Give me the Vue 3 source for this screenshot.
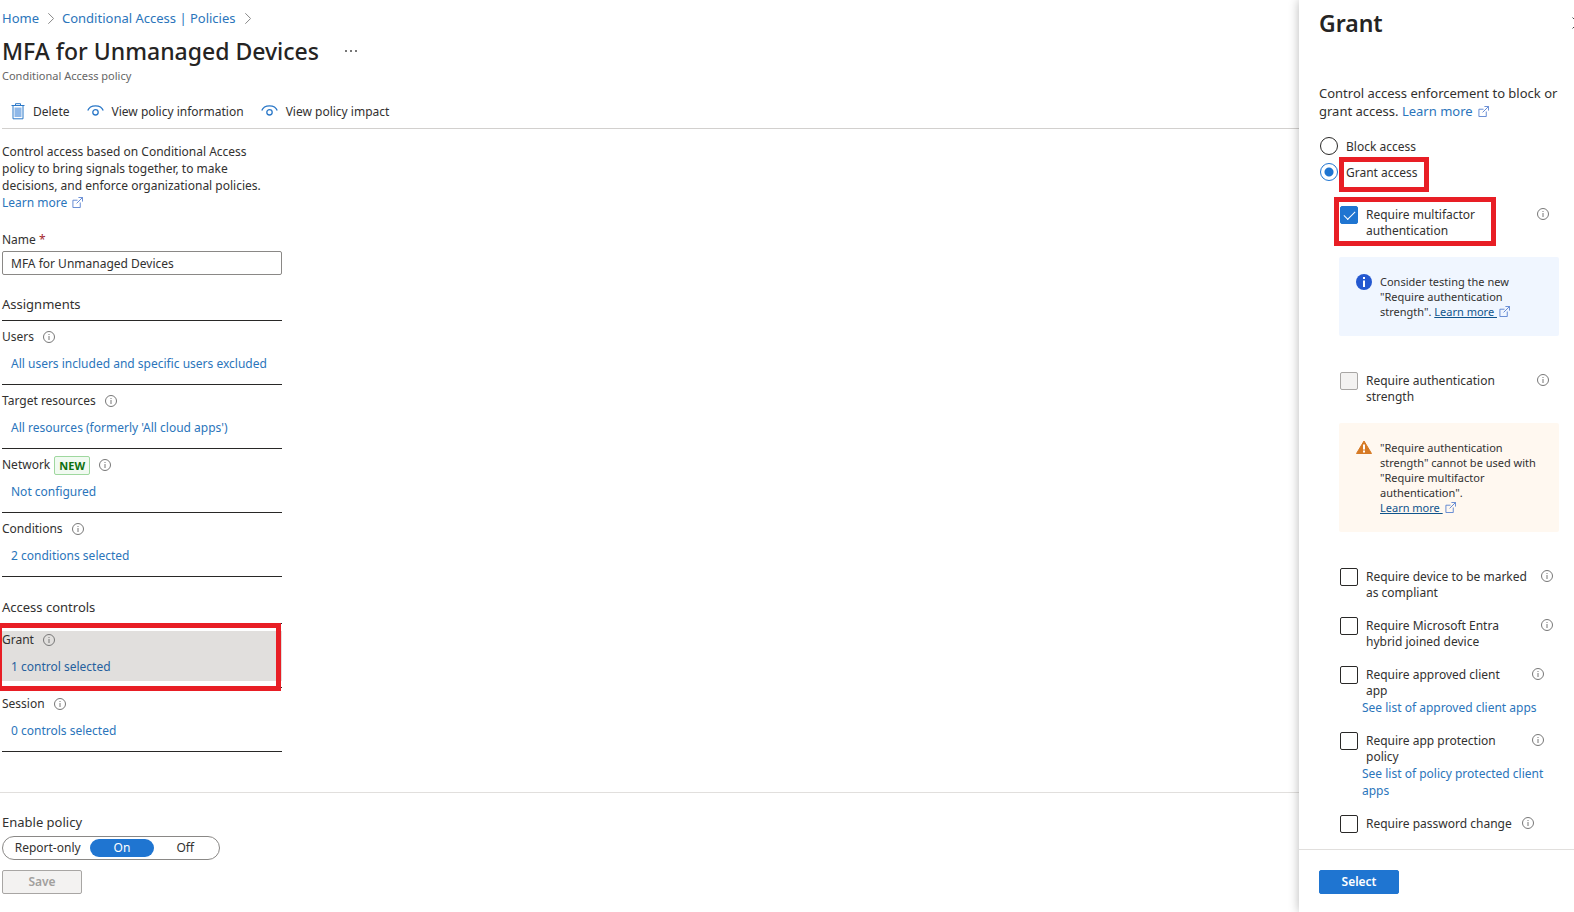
<template>
  <div class="page">
    <main class="blade">
      <header class="blade-header">
        <nav class="breadcrumb" aria-label="Breadcrumb">
          <a href="#">Home</a>
          <svg class="chevron" viewBox="0 0 8 12"><path d="M1.5 0l6 6-6 6" /></svg>
          <a href="#">Conditional Access | Policies</a>
          <svg class="chevron" viewBox="0 0 8 12"><path d="M1.5 0l6 6-6 6" /></svg>
        </nav>
        <div class="title-row">
          <h1>MFA for Unmanaged Devices</h1>
          <button class="more" type="button" aria-label="More actions">
            <svg viewBox="0 0 12 2"><path d="M0 0h2v2H0zM5 0h2v2H5zM10 0h2v2h-2z" /></svg>
          </button>
        </div>
        <p class="subtitle">Conditional Access policy</p>
      </header>

      <div class="toolbar">
        <button type="button">
          <svg class="trash" viewBox="0 0 14 17">
            <path class="bin" d="M3.500 4.500h7v9.500h-7z" />
            <path class="line" d="M.5 2.500h13M4.500 2.500V.7h5v1.800M2 2.500v13.300h10V2.500" />
          </svg>
          Delete
        </button>
        <button v-for="label in viewActions" :key="label" type="button">
          <svg class="eye" viewBox="0 0 17 14">
            <path d="M.8 5.500C1.800 2.600 4.800.8 8.500.8s6.700 1.800 7.700 4.700" />
            <circle cx="8.500" cy="7.300" r="2.700" />
          </svg>
          {{ label }}
        </button>
      </div>

      <div class="blade-body">
        <p class="intro">
          Control access based on Conditional Access policy to bring signals together, to make
          decisions, and enforce organizational policies.
          <a class="learn" href="#">Learn more <svg class="external" viewBox="0 0 12 12"><path :d="externalPath" /></svg></a>
        </p>

        <label class="field-label" for="policy-name">Name <span class="required">*</span></label>
        <input id="policy-name" v-model="policyName" class="text-input" type="text" />

        <section v-for="group in groups" :key="group.title" class="group">
          <h2>{{ group.title }}</h2>
          <div v-for="item in group.items" :key="item.label" class="setting">
            <div class="setting-inner" :class="{ selected: item.selected }">
              <div class="setting-label">
                {{ item.label }}
                <span v-if="item.isNew" class="badge">NEW</span>
                <svg class="info" viewBox="0 0 12 12"><circle cx="6" cy="6" r="5.500" /><path d="M6 5v4M6 3v1" /></svg>
              </div>
              <a href="#">{{ item.value }}</a>
            </div>
            <span v-if="item.selected" class="marker marker-setting"></span>
          </div>
        </section>
      </div>

      <footer class="blade-footer">
        <fieldset>
          <legend>Enable policy</legend>
          <div class="toggle">
            <label v-for="state in states" :key="state" :class="{ active: enabled === state }">
              <input v-model="enabled" type="radio" name="enable-policy" :value="state" />
              {{ state }}
            </label>
          </div>
        </fieldset>
        <button class="btn" type="button" disabled>Save</button>
      </footer>
    </main>

    <aside class="panel">
      <header class="panel-header">
        <h2>Grant</h2>
        <button class="close" type="button" aria-label="Close">
          <svg viewBox="0 0 12 12"><path d="M.5.5l11 11M11.500.5l-11 11" /></svg>
        </button>
      </header>

      <div class="panel-body">
        <p class="panel-intro">
          Control access enforcement to block or grant access.
          <a class="learn" href="#">Learn more <svg class="external" viewBox="0 0 12 12"><path :d="externalPath" /></svg></a>
        </p>

        <div class="radios">
          <label class="radio">
            <input v-model="mode" type="radio" name="mode" value="block" />
            <span>Block access</span>
          </label>
          <label class="radio">
            <input v-model="mode" type="radio" name="mode" value="grant" />
            <span class="marked">Grant access<i class="marker marker-radio"></i></span>
          </label>
        </div>

        <div class="controls">
          <template v-for="control in controls" :key="control.id">
            <div class="control" :class="control.size">
              <input :id="control.id" v-model="control.checked" type="checkbox" :disabled="control.disabled" />
              <label :for="control.id">{{ control.label }}</label>
              <svg class="info" viewBox="0 0 12 12"><circle cx="6" cy="6" r="5.500" /><path d="M6 5v4M6 3v1" /></svg>
              <span v-if="control.checked" class="marker marker-control"></span>
            </div>
            <a v-if="control.link" class="control-link" href="#">{{ control.link }}</a>
            <div v-if="control.note" class="note" :class="control.note.type">
              <svg v-if="control.note.type === 'tip'" class="note-icon" viewBox="0 0 16 16">
                <circle cx="8" cy="8" r="8" fill="#2458d0" />
                <path d="M7 6.500h2V13H7zM7 3h2v2H7z" fill="#fff" />
              </svg>
              <svg v-else class="note-icon" viewBox="0 0 16 16">
                <path d="M8 1L15.500 13.500H.5z" fill="#d67a25" stroke="#d67a25" stroke-linejoin="round" />
                <path d="M7 4.500h2v5H7zM7 10.500h2v2H7z" fill="#fff" />
              </svg>
              <p>
                {{ control.note.text }}
                <br v-if="control.note.type === 'warn'" />
                <a href="#"><u>Learn more&nbsp;</u><svg class="external" viewBox="0 0 12 12"><path :d="externalPath" /></svg></a>
              </p>
            </div>
          </template>
        </div>
      </div>

      <footer class="panel-footer">
        <button class="btn primary" type="button">Select</button>
      </footer>
    </aside>
  </div>
</template>

<script setup>
import { ref } from 'vue';

const externalPath = 'M6 3.500H1v8h8V6M7 .5h4.500V5M11.500.5L5 7';

const viewActions = ['View policy information', 'View policy impact'];
const states = ['Report-only', 'On', 'Off'];

const policyName = ref('MFA for Unmanaged Devices');
const enabled = ref('On');
const mode = ref('grant');

const groups = [
  {
    title: 'Assignments',
    items: [
      { label: 'Users', value: 'All users included and specific users excluded' },
      { label: 'Target resources', value: "All resources (formerly 'All cloud apps')" },
      { label: 'Network', value: 'Not configured', isNew: true },
      { label: 'Conditions', value: '2 conditions selected' }
    ]
  },
  {
    title: 'Access controls',
    items: [
      { label: 'Grant', value: '1 control selected', selected: true },
      { label: 'Session', value: '0 controls selected' }
    ]
  }
];

const controls = ref([
  {
    id: 'mfa',
    label: 'Require multifactor authentication',
    checked: true,
    note: { type: 'tip', text: 'Consider testing the new "Require authentication strength".' }
  },
  {
    id: 'strength',
    label: 'Require authentication strength',
    checked: false,
    disabled: true,
    note: { type: 'warn', text: '"Require authentication strength" cannot be used with "Require multifactor authentication".' }
  },
  { id: 'compliant', label: 'Require device to be marked as compliant', checked: false, size: 'wide' },
  { id: 'hybrid', label: 'Require Microsoft Entra hybrid joined device', checked: false, size: 'wide' },
  { id: 'client', label: 'Require approved client app', checked: false, size: 'narrow', link: 'See list of approved client apps' },
  { id: 'protection', label: 'Require app protection policy', checked: false, size: 'narrow', link: 'See list of policy protected client apps' },
  { id: 'password', label: 'Require password change', checked: false }
]);
</script>

<style>
body {
  margin: 0;
  background: #fff;
}
</style>

<style scoped>
.page {
  display: flex;
  min-height: 100vh;
  overflow: hidden;
  color: #323130;
  font-family: 'Segoe UI', 'Noto Sans', sans-serif;
  font-size: 12px;
  line-height: 18px;
}

.page * {
  box-sizing: border-box;
}

h1, h2, p {
  margin: 0;
}

a {
  color: #2b75bb;
  text-decoration: none;
}

button {
  font: inherit;
  color: inherit;
  cursor: pointer;
}

svg {
  flex: none;
  fill: none;
}

/* Main blade */
.blade {
  display: flex;
  flex: 1;
  flex-direction: column;
  min-width: 0;
}

.blade-header {
  padding: 8px 2px 0;
}

.breadcrumb {
  display: flex;
  align-items: center;
  gap: 8px;
  font-size: 13px;
  line-height: 20px;
}

.chevron {
  width: 7px;
  height: 11px;
  stroke: #777;
}

.title-row {
  display: flex;
  align-items: center;
  gap: 26px;
  margin-top: 7px;
}

h1,
.panel-header h2 {
  color: #252423;
  font-size: 23px;
  font-weight: 500;
  line-height: 32px;
}

.more {
  display: flex;
  padding: 0;
  border: 0;
  background: none;
}

.more svg {
  width: 12px;
  height: 2px;
  fill: #777;
}

.subtitle {
  margin-top: 1px;
  color: #666;
  font-size: 11px;
  line-height: 16px;
}

.toolbar {
  display: flex;
  gap: 17px;
  margin: 11px 0 0 2px;
  padding: 0 9px;
  border-bottom: 1px solid #d2d0ce;
}

.toolbar button {
  display: flex;
  align-items: center;
  gap: 8px;
  height: 33px;
  padding: 0;
  border: 0;
  background: none;
}

.trash {
  width: 14px;
  height: 17px;
}

.trash .bin {
  fill: #8fb8e8;
}

.trash .line,
.eye {
  stroke: #2b78c8;
}

.eye {
  width: 17px;
  height: 14px;
  stroke-width: 1.3;
}

.blade-body {
  width: 280px;
  margin-left: 2px;
  padding-top: 14px;
}

.intro {
  line-height: 17px;
}

.learn {
  white-space: nowrap;
}

.external {
  width: 11px;
  height: 11px;
  margin-left: 2px;
  stroke: #5a82d0;
  vertical-align: -1px;
}

.field-label {
  display: block;
  margin: 20px 0 2px;
}

.required {
  color: #a4262c;
}

.text-input {
  width: 100%;
  height: 24px;
  padding: 0 8px;
  border: 1px solid #8a8886;
  border-radius: 2px;
  color: inherit;
  font: inherit;
}

.group {
  margin-top: 20px;
}

.group + .group {
  margin-top: 21px;
}

.group h2 {
  padding-bottom: 7px;
  border-bottom: 1px solid #292827;
  font-size: 13px;
  font-weight: 400;
}

.setting {
  position: relative;
  padding: 7px 0 6px;
  border-bottom: 1px solid #292827;
}

.setting-inner {
  display: flex;
  flex-direction: column;
  gap: 9px;
  padding-bottom: 5px;
}

.setting-inner.selected {
  background: #e1dfdd;
}

.selected a {
  color: #265f9e;
}

.setting-label {
  display: flex;
  align-items: center;
  height: 18px;
}

.setting-inner a {
  margin-left: 9px;
}

.badge {
  margin-left: 4px;
  padding: 0 4px;
  border: 1px solid #9fd89f;
  border-radius: 2px;
  background: #f1faf1;
  color: #0e700e;
  font-size: 11px;
  font-weight: 700;
  line-height: 17px;
}

.info {
  width: 12px;
  height: 12px;
  margin-left: 9px;
  stroke: #777;
}

/* Red call-out frames */
.marker {
  position: absolute;
  border: 5px solid #e81e25;
  pointer-events: none;
}

.marker-setting {
  inset: -1px 1px -4px -5px;
}

.marker-radio {
  inset: -6px -11px -9px -7px;
}

.marker-control {
  top: -9px;
  bottom: -7px;
  left: -6px;
  width: 162px;
}

/* Footer of the blade */
.blade-footer {
  margin-top: auto;
  padding: 20px 2px 18px;
  border-top: 1px solid #e1dfdd;
}

fieldset {
  min-width: 0;
  margin: 0 0 10px;
  padding: 0;
  border: 0;
}

legend {
  padding: 0 0 5px;
  font-size: 13px;
}

.toggle {
  display: flex;
  align-items: center;
  width: 218px;
  height: 24px;
  padding: 0 2px;
  border: 1px solid #8a8886;
  border-radius: 12px;
}

.toggle label {
  flex: 1 1 62px;
  border-radius: 9px;
  text-align: center;
}

.toggle label:first-child {
  flex-basis: 84px;
}

.toggle .active {
  background: #1f75d1;
  color: #fff;
}

.toggle input {
  position: absolute;
  opacity: 0;
}

.btn {
  width: 80px;
  height: 24px;
  padding: 0;
  border: 1px solid #a8a6a4;
  border-radius: 2px;
  background: #f3f2f1;
  font-weight: 600;
}

.btn:disabled {
  color: #a19f9d;
}

.btn.primary {
  border-color: #1f75d1;
  background: #1f75d1;
  color: #fff;
}

/* Grant panel */
.panel {
  display: flex;
  flex: none;
  flex-direction: column;
  width: 275px;
  background: #fff;
  box-shadow: 0 0 10px rgba(0, 0, 0, 0.28);
}

.panel-header {
  display: flex;
  align-items: center;
  justify-content: space-between;
  margin-right: -10px;
  padding: 7px 0 0 20px;
}

.panel-header h2 {
  font-weight: 600;
}

.close {
  display: flex;
  padding: 0;
  border: 0;
  background: none;
}

.close svg {
  width: 12px;
  height: 12px;
  stroke: #444;
}

.panel-body {
  flex: 1;
  padding: 45px 8px 16px 20px;
}

.panel-intro {
  font-size: 13px;
}

.radios {
  display: flex;
  flex-direction: column;
  gap: 6px;
  margin: 17px 0 23px 1px;
}

.radio {
  display: flex;
  gap: 8px;
  line-height: 20px;
}

.marked {
  position: relative;
}

input[type='radio'],
input[type='checkbox'] {
  flex: none;
  width: 18px;
  height: 18px;
  margin: 0;
  border: 1px solid #292827;
  background: #fff;
  appearance: none;
}

input[type='radio'] {
  border-radius: 50%;
}

input[type='radio']:checked {
  border-color: #1f75d1;
  background: radial-gradient(circle, #1f75d1 4px, #fff 5px);
}

input[type='checkbox'] {
  border-radius: 2px;
}

input[type='checkbox']:checked {
  border-color: #1f75d1;
  background: #1f75d1;
}

input[type='checkbox']:checked::after {
  display: block;
  width: 10px;
  height: 5px;
  margin: 4px 0 0 3px;
  border: solid #fff;
  border-width: 0 0 1px 1px;
  content: '';
  transform: rotate(-45deg);
}

input[type='checkbox']:disabled {
  border-color: #a8a6a4;
  background: #f3f2f1;
}

.controls {
  margin-left: 21px;
}

.control {
  position: relative;
  display: flex;
  align-items: flex-start;
  margin-top: 16px;
}

.control:first-child {
  margin-top: 0;
}

.control label {
  max-width: 161px;
  margin: 1px 0 0 8px;
  line-height: 16px;
}

.control.wide label {
  max-width: 165px;
}

.control.narrow label {
  max-width: 156px;
}

.control .info {
  margin: 2px 0 0 10px;
}

.control-link {
  display: block;
  margin-left: 22px;
  line-height: 17px;
}

.note {
  display: flex;
  gap: 8px;
  margin: 18px 7px 36px -1px;
  padding: 17px;
  border-radius: 2px;
  font-size: 11px;
  line-height: 15px;
}

.note.tip {
  background: #f0f6ff;
}

.note.warn {
  background: #fff8f0;
}

.note-icon {
  width: 16px;
  height: 16px;
}

.note a {
  color: #0f548c;
  white-space: nowrap;
}

.panel-footer {
  padding: 20px 20px 18px;
  border-top: 1px solid #e1dfdd;
}
</style>
